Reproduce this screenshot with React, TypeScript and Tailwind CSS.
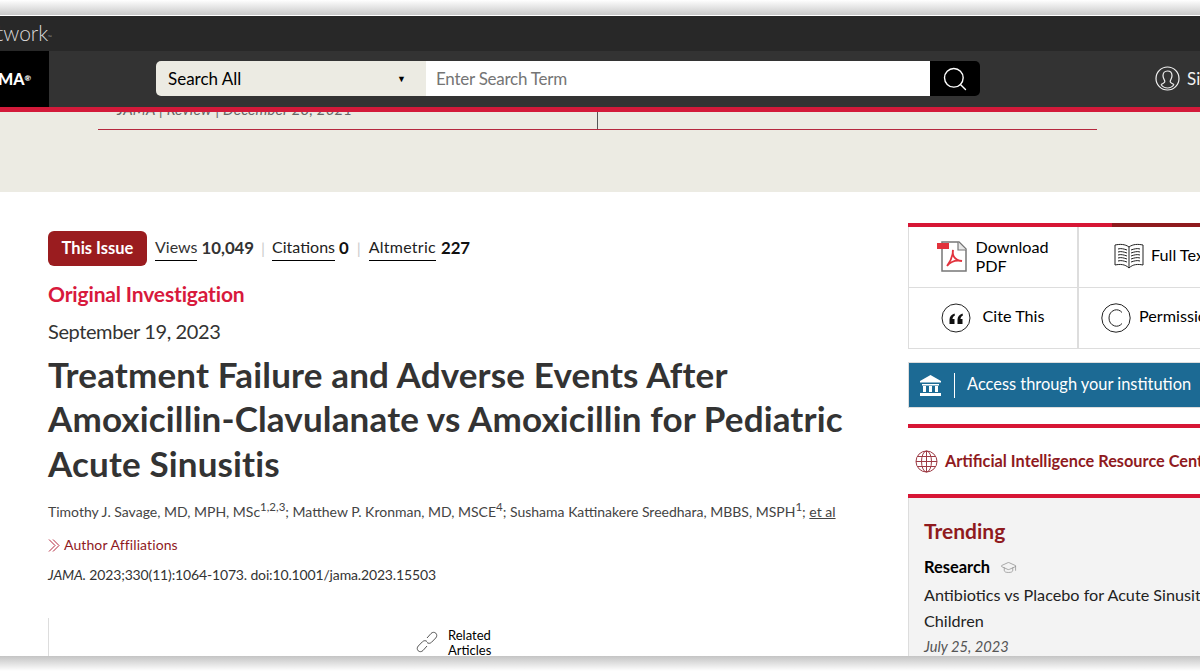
import { Search, GraduationCap } from "lucide-react";

const font = { fontFamily: 'Lato, "Noto Sans", sans-serif' };

function PdfIcon() {
  return (
    <svg width="30" height="31" viewBox="0 0 30 31" className="shrink-0">
      <path d="M5 1h17l7 7v22H5z" fill="#fff" stroke="#777" strokeWidth="1.5" />
      <path d="M21 1v8h8" fill="#e8e8e8" stroke="#777" strokeWidth="1.2" />
      <rect x="0" y="2" width="12" height="6" fill="#e2333d" />
      <path d="M16 9c-1 5 1 10 9 11-5-1-11 0-15 5 3-4 6-10 6-16z" fill="none" stroke="#e2333d" strokeWidth="1.8" />
    </svg>
  );
}

function BookIcon() {
  return (
    <svg width="30" height="27" viewBox="0 0 30 27" fill="none" stroke="#222" strokeWidth="1" className="shrink-0">
      <path d="M15 4C11 1 6 1 1 2v20c5-1 10-1 14 3 4-4 9-4 14-3V2c-5-1-10-1-14 2zM15 4v21" />
      <path d="M4 6c3-1 6 0 9 1M4 9c3-1 6 0 9 1M4 12c3-1 6 0 9 1M4 15c3-1 6 0 9 1M4 18c3-1 6 0 9 1M26 6c-3-1-6 0-9 1M26 9c-3-1-6 0-9 1M26 12c-3-1-6 0-9 1M26 15c-3-1-6 0-9 1M26 18c-3-1-6 0-9 1" />
    </svg>
  );
}

function CiteIcon() {
  return (
    <svg width="30" height="30" viewBox="0 0 30 30" className="shrink-0">
      <circle cx="15" cy="15" r="14" fill="none" stroke="#222" strokeWidth="1" />
      <path d="M13.500 10.500c-3 1-5 3-5 6v4.500h5v-5h-2c0-1.500 1-3 2.500-3.500zM21.500 10.500c-3 1-5 3-5 6v4.500h5v-5h-2c0-1.500 1-3 2.500-3.500z" fill="#111" />
    </svg>
  );
}

function CopyrightIcon() {
  return (
    <svg width="30" height="30" viewBox="0 0 30 30" fill="none" stroke="#222" strokeWidth="1" className="shrink-0">
      <circle cx="15" cy="15" r="14.200" />
      <path d="M21 9.500c-2-2.500-5-3.200-7.500-2.400C10 8.200 8 11.200 8 15s2 6.800 5.500 7.900c2.500.8 5.500.1 7.500-2.400" />
    </svg>
  );
}

function UserIcon() {
  return (
    <svg width="25" height="25" viewBox="0 0 25 25" fill="none" stroke="#f2f2f2" strokeWidth="1.200">
      <circle cx="12.500" cy="12.500" r="11.500" />
      <path d="M12.500 5c-3 0-4.500 2.200-4.500 4.800 0 2.500 1.500 4 1.800 5.500.2 1.200-1.300 2-3.800 3.200M12.500 5c3 0 4.500 2.200 4.500 4.800 0 2.500-1.500 4-1.800 5.500-.2 1.200 1.300 2 3.800 3.200" />
      <path d="M6 18.500c2 2.800 4 3.500 6.500 3.500s4.500-.7 6.500-3.500" />
    </svg>
  );
}

function InstitutionIcon() {
  return (
    <svg width="23" height="23" viewBox="0 0 23 23" fill="#fff" className="shrink-0">
      <path d="M11.500 1L22 7v1.500H1V7zM3 10h17v1.500H3zM1 19h21v3H1z" />
      <path d="M4 12h3v6H4zM10 12h3v6h-3zM16 12h3v6h-3z" />
    </svg>
  );
}

function GlobeIcon() {
  return (
    <svg width="23" height="23" viewBox="0 0 23 23" fill="none" stroke="#9d3a44" strokeWidth="1" className="shrink-0">
      <circle cx="11.500" cy="11.500" r="10.500" />
      <ellipse cx="11.500" cy="11.500" rx="5" ry="10.500" />
      <path d="M11.500 1v21M1 11.500h21M2.500 6.500h18M2.500 16.500h18" />
    </svg>
  );
}

function ChevronsIcon() {
  return (
    <svg width="12" height="13" viewBox="0 0 12 13" fill="none" stroke="#b5283e" strokeWidth="1" className="shrink-0">
      <path d="M1 .5l6 6-6 6M5 .5l6 6-6 6" />
    </svg>
  );
}

function LinkIcon() {
  return (
    <svg width="24" height="24" viewBox="0 0 24 24" fill="none" stroke="#555" strokeWidth="1" className="shrink-0">
      <path d="M12 8l4-4.500c1.500-1.500 3.500-1.500 4.800-.3 1.300 1.300 1.300 3.300-.1 4.800l-4.200 4.300c-1.400 1.300-3.200 1.300-4.500.2" />
      <path d="M12 16l-4 4.500c-1.500 1.500-3.500 1.500-4.800.3-1.300-1.300-1.300-3.300.1-4.800l4.200-4.300c1.400-1.300 3.200-1.300 4.500-.2" />
    </svg>
  );
}

export default function App() {
  return (
    <div className="flex h-[671px] w-[1200px] flex-col overflow-hidden bg-white" style={font}>
      <div className="h-[15px] shrink-0 bg-gradient-to-b from-white to-[#c9c9c9]" />
      <div className="h-px shrink-0 bg-white" />

      <div className="h-[35px] shrink-0 bg-[#282828]">
        <div className="flex h-full w-[52px] items-center justify-end overflow-hidden text-[21px] leading-none font-light text-[#d8d8d8]">
          <span className="-mt-[2px] whitespace-nowrap">Network<sup className="text-[5px]">™</sup></span>
        </div>
      </div>

      <div className="flex h-[56px] shrink-0 items-start bg-[#333333]">
        <div className="flex h-full w-[49px] shrink-0 items-center justify-end overflow-hidden bg-black pr-[18px] text-[16px] font-black text-white">
          <span>JAMA<sup className="text-[8px]">®</sup></span>
        </div>
        <div className="mt-[10px] ml-[107px] flex h-[35px] w-[824px] shrink-0">
          <div className="flex w-[270px] items-center justify-between rounded-l-[5px] bg-[#ecebe3] pr-[20px] pl-3 text-[17px] text-black">
            <span>Search All</span>
            <span className="text-[9px]">▼</span>
          </div>
          <div className="flex flex-1 items-center bg-white pl-[10px] text-[17px] tracking-[-0.25px] text-[#757575]">Enter Search Term</div>
          <div className="flex w-[50px] items-center justify-center rounded-r-[5px] bg-black text-white">
            <Search className="h-[28px] w-[28px]" strokeWidth={1.200} />
          </div>
        </div>
        <div className="mt-[15px] ml-[175px] flex items-center gap-[7px] text-[17px] text-[#f2f2f2]">
          <UserIcon />
          <span>Sign</span>
        </div>
      </div>

      <div className="h-[5px] shrink-0 bg-[#d31a3a]" />

      <div className="h-[80px] shrink-0 overflow-hidden bg-[#ecebe3] pl-[98px]">
        <div className="flex h-[18px] w-[999px] border-b border-[#b5283e]">
          <div className="w-[500px] overflow-hidden border-r border-[#555] pl-[19px]">
            <div className="-mt-[13px] text-[15px] leading-[20px] tracking-[0.2px] text-[#666] italic">JAMA | Review | December 28, 2021</div>
          </div>
        </div>
      </div>

      <div className="flex min-h-0 flex-1 overflow-hidden">
        <div className="w-[908px] shrink-0 pt-[39px] pl-[48px]">
          <div className="flex h-[35px] items-center text-[16px] whitespace-nowrap">
            <span className="flex h-[35px] w-[99px] items-center justify-center rounded-[6px] bg-[#9a1c1f] text-[16.5px] font-bold text-white">This Issue</span>
            <span className="-mt-[2px] ml-2 border-b border-black leading-[26px] text-[#333]">Views</span>
            <span className="-mt-[2px] ml-1 text-[16.8px] font-bold text-[#333]">10,049</span>
            <span className="-mt-[2px] mx-[7px] text-[#ccc]">|</span>
            <span className="-mt-[2px] border-b border-black leading-[26px] text-[#222]">Citations</span>
            <span className="-mt-[2px] ml-1 text-[16.8px] font-bold text-[#111]">0</span>
            <span className="-mt-[2px] mx-[8px] text-[#ccc]">|</span>
            <span className="-mt-[2px] border-b border-black leading-[26px] tracking-[0.25px] text-[#222]">Altmetric</span>
            <span className="-mt-[2px] ml-[5px] text-[16.8px] font-bold text-[#111]">227</span>
          </div>
          <div className="mt-[14px] text-[21px] leading-[28px] font-bold tracking-[-0.15px] text-[#d8193c]">Original Investigation</div>
          <div className="mt-[9px] text-[20px] leading-[28px] tracking-[-0.4px] text-[#333]">September 19, 2023</div>
          <h1 className="mt-[6.5px] w-[810px] text-[35px] leading-[44.5px] font-bold tracking-[0.15px] text-[#333]">
            Treatment Failure and Adverse Events After Amoxicillin-Clavulanate vs Amoxicillin for Pediatric Acute Sinusitis
          </h1>
          <div className="mt-[17px] text-[14px] leading-[20px] whitespace-nowrap text-[#444]">
            Timothy J. Savage, MD, MPH, MSc<sup className="text-[11.5px]">1,2,3</sup>; Matthew P. Kronman, MD, MSCE<sup className="text-[11.5px]">4</sup>; Sushama Kattinakere Sreedhara, MBBS, MSPH<sup className="text-[11.5px]">1</sup>;&nbsp;<span className="underline">et al</span>
          </div>
          <div className="mt-[13px] flex items-center gap-[4px] text-[14px] leading-[20px] tracking-[0.1px] text-[#8f1a1e]">
            <ChevronsIcon />
            <span>Author Affiliations</span>
          </div>
          <div className="mt-[10px] text-[14px] leading-[20px] tracking-[-0.15px] text-[#333]"><i>JAMA.</i> 2023;330(11):1064-1073. doi:10.1001/jama.2023.15503</div>
          <div className="mt-[33px] flex h-[40px] w-[460px] border-l border-[#ddd] pl-[366px]">
            <div className="mt-[12px]"><LinkIcon /></div>
            <div className="mt-[10px] ml-[9px] text-[13px] leading-[15px] text-black">Related<br />Articles</div>
          </div>
        </div>

        <div className="w-[340px] shrink-0 pt-[31px]">
          <div className="flex h-1">
            <div className="w-[204px] bg-[#d71635]" />
            <div className="flex-1 bg-[#8f1a1e]" />
          </div>
          <div className="grid h-[122px] grid-cols-[170px_170px] grid-rows-2 border-b border-l border-[#ddd] text-[16.2px] text-black">
            <div className="flex items-center justify-center gap-[8px] border-r-2 border-b border-[#ddd] leading-[19px]"><PdfIcon /><span className="-mt-[2px]">Download<br />PDF</span></div>
            <div className="flex items-center gap-[7px] border-b border-[#ddd] pl-[35px] whitespace-nowrap"><BookIcon /><span className="-mt-[3px]">Full Text</span></div>
            <div className="flex items-center justify-center gap-[11px] border-r-2 border-[#ddd]"><CiteIcon /><span className="-mt-1">Cite This</span></div>
            <div className="flex items-center gap-2 pl-[22px] whitespace-nowrap"><CopyrightIcon /><span className="-mt-1">Permissions</span></div>
          </div>
          <div className="mt-[13px] flex h-[46px] items-center border border-[#ddd] bg-[#1c6a94] pl-[10px] text-[16.4px] whitespace-nowrap text-white">
            <InstitutionIcon />
            <span className="mx-[12px] h-[25px] w-px bg-white" />
            <span className="-mt-px">Access through your institution</span>
          </div>
          <div className="mt-[16px] h-1 bg-[#d71635]" />
          <div className="flex h-[66px] items-center gap-[7px] pl-[7px] text-[16.3px] font-bold whitespace-nowrap text-[#8f1a1e]">
            <GlobeIcon />
            <span>Artificial Intelligence Resource Center</span>
          </div>
          <div className="h-1 bg-[#d71635]" />
          <div className="h-[200px] border-l border-[#ddd] bg-[#f3f3f3] pt-[20px] pl-[15px] whitespace-nowrap">
            <div className="text-[21px] leading-[26px] font-bold text-[#8f1a1e]">Trending</div>
            <div className="mt-[12px] flex items-center gap-[10px] text-[16.4px] leading-[22px] font-bold text-black">
              Research <GraduationCap className="h-[17px] w-[17px] text-[#888]" strokeWidth={1} />
            </div>
            <div className="mt-[4px] text-[16.2px] leading-[26px] text-[#222]">Antibiotics vs Placebo for Acute Sinusitis in<br />Children</div>
            <div className="mt-[1px] text-[14.7px] leading-[22px] text-[#555] italic">July 25, 2023</div>
          </div>
        </div>
      </div>

      <div className="h-[15px] shrink-0 bg-gradient-to-b from-[#c4c4c4] to-white" />
    </div>
  );
}
